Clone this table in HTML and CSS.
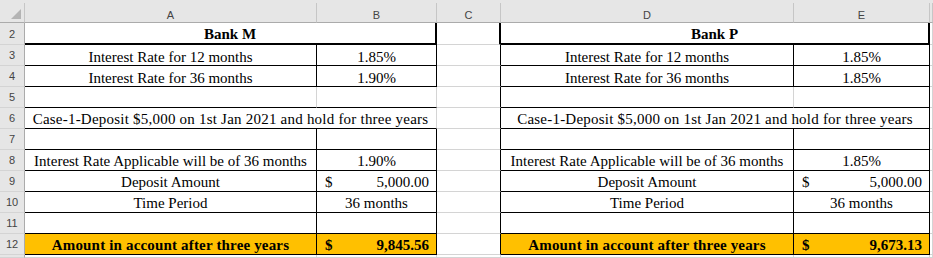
FILE: index.html
```html
<!DOCTYPE html>
<html>
<head>
  <title>Deposit comparison</title>
  <link rel="stylesheet" href="styles.css">
</head>
<body>
  <div class="sheet">
    <!-- column headers -->
    <div class="corner">
      <svg viewBox="0 0 24 19" width="24" height="19"><polygon points="21,6 21,16 11,16" fill="#b4b4b4"/></svg>
    </div>
    <div class="col-head">A</div>
    <div class="col-head">B</div>
    <div class="col-head">C</div>
    <div class="col-head">D</div>
    <div class="col-head">E</div>
    <div class="col-head"></div>

    <!-- row 2 -->
    <div class="row-head">2</div>
    <div class="cell span2 bold r2 b2">Bank M</div>
    <div class="cell r2"></div>
    <div class="cell span2 bold r2 b2">Bank P</div>
    <div class="cell"></div>

    <!-- row 3 -->
    <div class="row-head">3</div>
    <div class="cell tight r b">Interest Rate for 12 months</div>
    <div class="cell tight r b">1.85%</div>
    <div class="cell r"></div>
    <div class="cell tight r b">Interest Rate for 12 months</div>
    <div class="cell tight r b">1.85%</div>
    <div class="cell"></div>

    <!-- row 4 -->
    <div class="row-head">4</div>
    <div class="cell tight r b">Interest Rate for 36 months</div>
    <div class="cell tight r b">1.90%</div>
    <div class="cell r"></div>
    <div class="cell tight r b">Interest Rate for 36 months</div>
    <div class="cell tight r b">1.85%</div>
    <div class="cell"></div>

    <!-- row 5 -->
    <div class="row-head">5</div>
    <div class="cell b"></div>
    <div class="cell b"></div>
    <div class="cell r"></div>
    <div class="cell b"></div>
    <div class="cell r b"></div>
    <div class="cell"></div>

    <!-- row 6 -->
    <div class="row-head">6</div>
    <div class="cell span2 wide b">Case-1-Deposit $5,000 on 1st Jan 2021 and hold for three years</div>
    <div class="cell r"></div>
    <div class="cell span2 wide r b">Case-1-Deposit $5,000 on 1st Jan 2021 and hold for three years</div>
    <div class="cell"></div>

    <!-- row 7 -->
    <div class="row-head">7</div>
    <div class="cell r b"></div>
    <div class="cell r b"></div>
    <div class="cell r"></div>
    <div class="cell r b"></div>
    <div class="cell r b"></div>
    <div class="cell"></div>

    <!-- row 8 -->
    <div class="row-head">8</div>
    <div class="cell r b">Interest Rate Applicable will be of 36 months</div>
    <div class="cell r b">1.90%</div>
    <div class="cell r"></div>
    <div class="cell r b">Interest Rate Applicable will be of 36 months</div>
    <div class="cell r b">1.85%</div>
    <div class="cell"></div>

    <!-- row 9 -->
    <div class="row-head">9</div>
    <div class="cell r b">Deposit Amount</div>
    <div class="cell acct r b"><span>$</span><span>5,000.00</span></div>
    <div class="cell r"></div>
    <div class="cell r b">Deposit Amount</div>
    <div class="cell acct r b"><span>$</span><span>5,000.00</span></div>
    <div class="cell"></div>

    <!-- row 10 -->
    <div class="row-head">10</div>
    <div class="cell r b">Time Period</div>
    <div class="cell r b">36 months</div>
    <div class="cell r"></div>
    <div class="cell r b">Time Period</div>
    <div class="cell r b">36 months</div>
    <div class="cell"></div>

    <!-- row 11 -->
    <div class="row-head">11</div>
    <div class="cell r b"></div>
    <div class="cell r b"></div>
    <div class="cell r"></div>
    <div class="cell r b"></div>
    <div class="cell r b"></div>
    <div class="cell"></div>

    <!-- row 12 -->
    <div class="row-head">12</div>
    <div class="cell gold bold r b">Amount in account after three years</div>
    <div class="cell gold bold acct r b"><span>$</span><span>9,845.56</span></div>
    <div class="cell r"></div>
    <div class="cell gold bold r b">Amount in account after three years</div>
    <div class="cell gold bold acct r b"><span>$</span><span>9,673.13</span></div>
    <div class="cell"></div>

    <!-- row 13 (cut off) -->
    <div class="row-head"></div>
    <div class="cell"></div>
    <div class="cell"></div>
    <div class="cell"></div>
    <div class="cell"></div>
    <div class="cell"></div>
    <div class="cell"></div>
  </div>
</body>
</html>
```

FILE: styles.css
```css
* {
  box-sizing: border-box;
}
body {
  margin: 0;
  background-color: #fff;
}
.sheet {
  display: grid;
  grid-template-columns: 25px 292px 120px 64px 293px 136px 3px;
  grid-template-rows: 23px 22px repeat(10, 21px) 3px;
  width: 933px;
  height: 258px;
  overflow: hidden;
  background-color: #e6e6e6;
}

/* headers */
.corner,
.col-head {
  margin-top: 3px;
  background-color: #e6e6e6;
  border-right: 1px solid #c6c6c6;
  border-bottom: 1px solid #ababab;
}
.corner svg {
  display: block;
}
.col-head {
  display: flex;
  justify-content: center;
  align-items: center;
  padding-top: 4px;
  font: 11px "Liberation Sans", Arial, sans-serif;
  color: #444;
}
.row-head {
  display: flex;
  justify-content: center;
  align-items: center;
  background-color: #e6e6e6;
  border-right: 1px solid #ababab;
  border-bottom: 1px solid #d4d4d4;
  font: 11px "Liberation Sans", Arial, sans-serif;
  color: #444;
}

/* cells */
.cell {
  display: flex;
  justify-content: center;
  align-items: flex-end;
  padding-bottom: 2px;
  background-color: #fff;
  border-right: 1px solid #d4d4d4;
  border-bottom: 1px solid #d4d4d4;
  font: 15px/13px "Liberation Serif", "Times New Roman", serif;
  color: #000;
  white-space: nowrap;
}
.span2 {
  grid-column: span 2;
}
.tight {
  padding-bottom: 1px;
}
.wide {
  letter-spacing: 0.22px;
}
.r {
  border-right-color: #000;
}
.b {
  border-bottom-color: #000;
}
.r2 {
  border-right: 2px solid #000;
}
.b2 {
  border-bottom: 2px solid #000;
}
.bold {
  font-weight: bold;
}
.gold {
  background-color: #ffc000;
}
.gold:not(.acct) {
  letter-spacing: 0.17px;
}
.acct {
  justify-content: space-between;
  padding-left: 8px;
  padding-right: 7px;
}
```
